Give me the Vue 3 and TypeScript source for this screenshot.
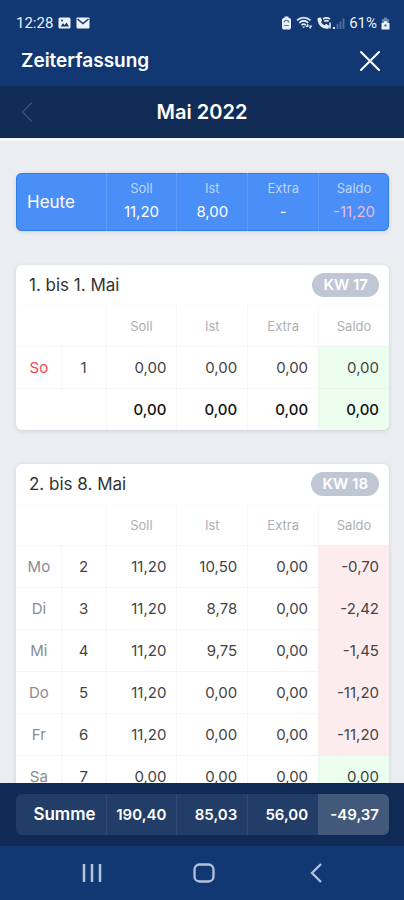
<script setup lang="ts">
interface Entry {
  day: string
  date: number
  values: string[]
  saldo: string
  tone: 'plus' | 'minus'
  holiday?: boolean
}

interface Week {
  title: string
  label: string
  entries: Entry[]
  total?: string[]
}

const columns: string[] = ['Soll', 'Ist', 'Extra', 'Saldo']

const today: string[] = ['11,20', '8,00', '-', '-11,20']

const weeks: Week[] = [
  {
    title: '1. bis 1. Mai',
    label: 'KW 17',
    entries: [
      { day: 'So', date: 1, values: ['0,00', '0,00', '0,00'], saldo: '0,00', tone: 'plus', holiday: true },
    ],
    total: ['0,00', '0,00', '0,00', '0,00'],
  },
  {
    title: '2. bis 8. Mai',
    label: 'KW 18',
    entries: [
      { day: 'Mo', date: 2, values: ['11,20', '10,50', '0,00'], saldo: '-0,70', tone: 'minus' },
      { day: 'Di', date: 3, values: ['11,20', '8,78', '0,00'], saldo: '-2,42', tone: 'minus' },
      { day: 'Mi', date: 4, values: ['11,20', '9,75', '0,00'], saldo: '-1,45', tone: 'minus' },
      { day: 'Do', date: 5, values: ['11,20', '0,00', '0,00'], saldo: '-11,20', tone: 'minus' },
      { day: 'Fr', date: 6, values: ['11,20', '0,00', '0,00'], saldo: '-11,20', tone: 'minus' },
      { day: 'Sa', date: 7, values: ['0,00', '0,00', '0,00'], saldo: '0,00', tone: 'plus' },
    ],
  },
]

const sums: string[] = ['190,40', '85,03', '56,00', '-49,37']
</script>

<template>
  <div class="screen">
    <div class="status">
      <div class="status-group">
        <span class="clock">12:28</span>
        <svg width="13" height="12" viewBox="0 0 13 12" aria-hidden="true">
          <rect x="0.5" y="0.5" width="12" height="11" rx="1.5" fill="#eef3fb" />
          <path d="M2.500 9.500 5 6.200l1.800 1.800L8.600 5.500l2.400 4z" fill="#123a73" />
          <circle cx="4" cy="3.500" r="1" fill="#123a73" />
        </svg>
        <svg width="14" height="12" viewBox="0 0 14 12" aria-hidden="true">
          <rect x="0.5" y="0.5" width="13" height="11" rx="1" fill="#eef3fb" />
          <path d="M1.500 2 7 6.500 12.500 2" fill="none" stroke="#123a73" stroke-width="1.500" />
        </svg>
      </div>
      <div class="status-group status-right">
        <svg width="11" height="14" viewBox="0 0 11 14" aria-hidden="true">
          <path d="M3.500 0.500h4v1.500h1.500l1 1.500v8.500l-1 1.500h-7l-1-1.500V3.500L2 2h1.500z" fill="#e6edf8" />
          <path d="M3.300 6.500c0-3 4.400-3 4.400 0M3.200 9.500h4.600" fill="none" stroke="#5c79a5" stroke-width="1.100" />
        </svg>
        <svg width="17" height="14" viewBox="0 0 17 14" aria-hidden="true">
          <g fill="none" stroke="#dce6f5" stroke-width="1.700">
            <path d="M1 4.300c4-3.700 9.500-3.700 13.500 0" />
            <path d="M3.300 6.800c2.700-2.500 6.200-2.500 8.900 0" />
            <path d="M5.500 9.200c1.400-1.300 3-1.300 4.400 0" />
          </g>
          <path d="M6.200 10.500h3L7.700 12.300zM9.500 11l2.200-3.500 2.200 3.500zM12 9.500l2.200 3.500 2.200-3.500z" fill="#dce6f5" />
        </svg>
        <svg width="28" height="14" viewBox="0 0 28 14" aria-hidden="true">
          <path d="M.5 2.200 3.500 1.200 5.200 4.500 4 6c.7 1.600 2 2.700 3.600 3.300L9 7.800l3.200 1.900-.8 3C5 13.500 .3 8.500 .5 2.200z" fill="#e6edf8" />
          <path d="M6 3c2.200-1.400 4.600-1.400 7 0M7.200 5.300c1.400-.9 3-.9 4.400 0M13 6.500v6" fill="none" stroke="#e6edf8" stroke-width="1.600" />
          <rect x="16" y="11" width="2" height="2" fill="#dce6f5" />
          <path d="M20.500 8v5M23.500 5.500v7.500M26.500 2.500v10.500" stroke="#4e709f" stroke-width="1.800" />
        </svg>
        <span class="charge">61%</span>
        <svg width="9" height="13" viewBox="0 0 9 13" aria-hidden="true">
          <path d="M3 .5h3V2h2v4H1V2h2z" fill="#6482ae" />
          <path d="M.5 6h2a2 2 0 0 1 4 0h2v6.500h-8z" fill="#eef3fb" />
          <circle cx="4.500" cy="8.500" r="1.200" fill="#5c79a5" />
        </svg>
      </div>
    </div>

    <header class="title-bar">
      <h1>Zeiterfassung</h1>
      <button type="button" class="icon-button" aria-label="Schließen">
        <svg width="22" height="22" viewBox="0 0 22 22" aria-hidden="true">
          <path d="M2 2l18 18M20 2 2 20" fill="none" stroke="#fff" stroke-width="2" stroke-linecap="round" />
        </svg>
      </button>
    </header>

    <div class="month-bar">
      <button type="button" class="icon-button" aria-label="Voriger Monat">
        <svg width="12" height="22" viewBox="0 0 12 22" aria-hidden="true">
          <path d="M10.500 2 1.500 11l9 9" fill="none" stroke="#3b5279" stroke-width="1.500" stroke-linecap="round" stroke-linejoin="round" />
        </svg>
      </button>
      <h2>Mai 2022</h2>
    </div>

    <main class="content">
      <section class="today">
        <strong class="today-name">Heute</strong>
        <div v-for="(column, i) in columns" :key="column" class="today-cell">
          <span class="today-label">{{ column }}</span>
          <span class="today-value" :class="{ negative: i === 3 }">{{ today[i] }}</span>
        </div>
      </section>

      <section v-for="week in weeks" :key="week.label" class="card">
        <div class="card-head">
          <h3>{{ week.title }}</h3>
          <span class="badge">{{ week.label }}</span>
        </div>
        <table :aria-label="week.title">
          <colgroup>
            <col class="narrow" />
            <col class="narrow" />
            <col v-for="column in columns" :key="column" class="wide" />
          </colgroup>
          <thead>
            <tr>
              <td colspan="2"></td>
              <th v-for="column in columns" :key="column" scope="col">{{ column }}</th>
            </tr>
          </thead>
          <tbody>
            <tr v-for="entry in week.entries" :key="entry.date">
              <td class="day" :class="{ holiday: entry.holiday }">{{ entry.day }}</td>
              <td class="date">{{ entry.date }}</td>
              <td v-for="(value, i) in entry.values" :key="i" class="number">{{ value }}</td>
              <td class="number" :class="entry.tone">{{ entry.saldo }}</td>
            </tr>
            <tr v-if="week.total" class="total">
              <td colspan="2"></td>
              <td v-for="(value, i) in week.total" :key="i" class="number" :class="{ plus: i === 3 }">{{ value }}</td>
            </tr>
          </tbody>
        </table>
      </section>
    </main>

    <footer class="sum-bar">
      <div class="sum">
        <span class="sum-cell sum-name">Summe</span>
        <span v-for="(sum, i) in sums" :key="i" class="sum-cell" :class="{ highlight: i === 3 }">{{ sum }}</span>
      </div>
    </footer>

    <nav class="system-nav">
      <button type="button" class="icon-button" aria-label="Letzte Apps">
        <svg width="20" height="20" viewBox="0 0 20 20" aria-hidden="true">
          <path d="M2 1v18M10 1v18M18 1v18" stroke="#b4c3dc" stroke-width="2.500" />
        </svg>
      </button>
      <button type="button" class="icon-button" aria-label="Startbildschirm">
        <svg width="22" height="20" viewBox="0 0 22 20" aria-hidden="true">
          <rect x="1.500" y="1.500" width="19" height="17" rx="5" fill="none" stroke="#b4c3dc" stroke-width="2.300" />
        </svg>
      </button>
      <button type="button" class="icon-button" aria-label="Zurück">
        <svg width="12" height="20" viewBox="0 0 12 20" aria-hidden="true">
          <path d="M11 1 2 10l9 9" fill="none" stroke="#b4c3dc" stroke-width="2.300" />
        </svg>
      </button>
    </nav>
  </div>
</template>

<style>
body {
  margin: 0;
}
</style>

<style scoped>
.screen {
  display: flex;
  flex-direction: column;
  height: 100vh;
  background: #ebedf0;
  color: #333;
  font-family: Inter, "Open Sans", sans-serif;
}

h1,
h2,
h3 {
  margin: 0;
}

svg {
  display: block;
}

.icon-button {
  display: flex;
  align-items: center;
  justify-content: center;
  padding: 0;
  border: 0;
  background: none;
}

.status {
  display: flex;
  justify-content: space-between;
  align-items: center;
  padding: 11px 14px 1px 16px;
  height: 24px;
  background: #113872;
  color: #e9eff9;
  font-family: Roboto, sans-serif;
  font-size: 15px;
  line-height: 24px;
}

.status-group {
  display: flex;
  align-items: center;
  gap: 5px;
}

.status-right {
  gap: 4px;
}

.title-bar {
  display: flex;
  justify-content: space-between;
  align-items: center;
  height: 50px;
  padding: 0 23px 0 21px;
  background: #113872;
  color: #fff;
}

h1 {
  font-size: 19px;
  font-weight: 600;
  line-height: 28px;
}

.month-bar {
  display: grid;
  grid-template-columns: 22px 1fr 22px;
  align-items: center;
  height: 52px;
  padding: 0 16px;
  background: #102b55;
  color: #fff;
}

h2 {
  font-size: 20px;
  font-weight: 600;
  line-height: 28px;
  text-align: center;
}

.content {
  display: flex;
  flex: 1;
  flex-direction: column;
  gap: 34px;
  min-height: 0;
  padding: 32px 15px 0 16px;
  border-top: 3px solid #f7f8fa;
  overflow: auto;
  scrollbar-width: none;
}

.today,
.card {
  flex-shrink: 0;
  border-radius: 6px;
  box-shadow: 0 1px 4px rgba(40, 60, 90, 0.16);
  overflow: hidden;
}

.today,
.sum {
  display: grid;
  grid-template-columns: 24fr repeat(4, 19fr);
}

.today {
  box-sizing: border-box;
  height: 58px;
  background: #4a8ef8;
  box-shadow: inset 0 0 0 1px #2f80e6, 0 1px 4px rgba(40, 60, 90, 0.16);
  color: #fff;
}

.today-name {
  padding-left: 11px;
  font-size: 17px;
  font-weight: 400;
  line-height: 58px;
}

.today-cell {
  display: flex;
  flex-direction: column;
  align-items: center;
  padding-top: 3px;
  border-left: 1px solid #5f9cfa;
}

.today-label {
  color: #bdd6fd;
  font-size: 13px;
  line-height: 24px;
}

.today-value {
  font-size: 15px;
  line-height: 24px;
}

.negative {
  color: #e6bbdc;
}

.card {
  background: #fff;
}

.card-head {
  display: flex;
  justify-content: space-between;
  align-items: center;
  height: 40px;
  padding: 0 10px 0 13px;
}

h3 {
  font-size: 17px;
  font-weight: 400;
  line-height: 24px;
}

.badge {
  padding: 0 11px;
  border-radius: 12px;
  background: #bfc6d4;
  color: #fff;
  font-size: 15px;
  font-weight: 600;
  line-height: 24px;
}

table {
  width: 100%;
  border-spacing: 0;
  table-layout: fixed;
}

.narrow {
  width: 12%;
}

.wide {
  width: 19%;
}

th,
td {
  box-sizing: border-box;
  height: 42px;
  padding: 0;
  border-left: 1px solid #f6f6f7;
  border-top: 1px solid #f3f4f5;
  color: #444;
  font-size: 15px;
  font-weight: 400;
  text-align: center;
}

thead th,
thead td {
  height: 41px;
  border-top-color: #fcfcfc;
  color: #adafb4;
  font-size: 13px;
}

th:first-child,
td:first-child {
  border-left-color: transparent;
}

td.day {
  color: #8a8c91;
}

td.holiday {
  color: #ee4a50;
}

.number {
  padding-right: 10px;
  text-align: right;
}

.total .number {
  color: #111;
  font-weight: 500;
}

.plus {
  border-color: #e6f8e9;
  background: #ecfeee;
}

.minus {
  border-color: #fdeced;
  background: #fdeced;
}

.sum-bar {
  padding: 11px 15px 11px 16px;
  background: #0f2a54;
}

.sum {
  border-radius: 6px;
  background: #223d67;
  overflow: hidden;
}

.sum-cell {
  padding-right: 10px;
  border-left: 1px solid #304a72;
  color: #fff;
  font-size: 15px;
  font-weight: 600;
  line-height: 41px;
  text-align: right;
}

.sum-name {
  border-left-color: transparent;
  font-size: 17px;
}

.highlight {
  border-left-color: #43597c;
  background: #43597c;
}

.system-nav {
  display: grid;
  grid-template-columns: repeat(3, 1fr);
  align-items: center;
  height: 54px;
  padding: 0 32px 0 36px;
  background: #113872;
}
</style>
